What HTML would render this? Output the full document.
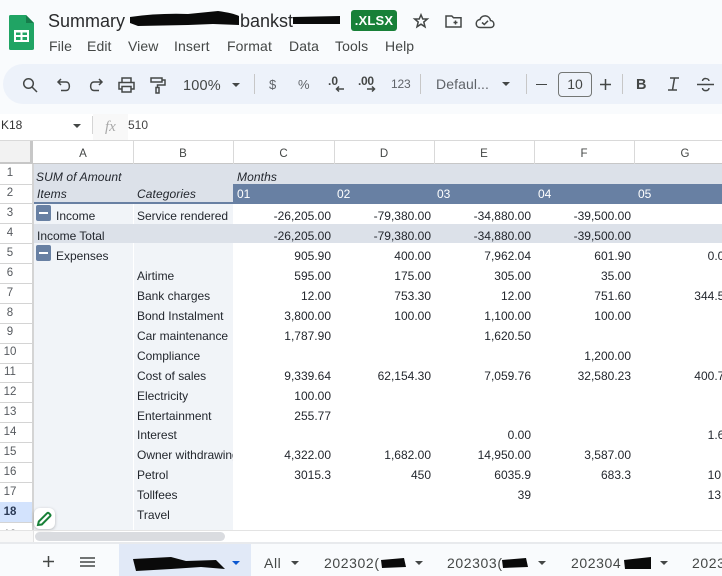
<!DOCTYPE html>
<html><head><meta charset="utf-8"><style>
html,body{margin:0;padding:0;width:722px;height:576px;overflow:hidden;background:#fff}
body{position:relative;font-family:"Liberation Sans",sans-serif;color:#333}
div,span{position:absolute;white-space:nowrap}
svg{position:absolute;overflow:visible}
.b{line-height:16px;height:16px;font-size:12px;color:#23272e}
.t{letter-spacing:-.02px}
.n{text-align:right;width:80px}
.c{left:251px}.d{left:351px}.e{left:451px}.f{left:551px}.g{left:651px}
.i{font-style:italic;letter-spacing:.1px}
.rh{left:0;width:33px;text-align:center;font-size:11.5px;line-height:18px;color:#55595e;padding-right:13px;box-sizing:border-box}
.rl{left:0;width:33px;height:1px;background:#d4d4d4}
.ch{top:144px;text-align:center;font-size:11.5px;line-height:20px;color:#444746}
.m{top:37px;font-size:14px;line-height:18px;color:#444746;letter-spacing:.1px}
.tt{top:554px;font-size:14px;line-height:18px;color:#444746;letter-spacing:.6px}
.ar{width:0;height:0;border-left:4px solid transparent;border-right:4px solid transparent;border-top:4px solid #444746}
.ic{fill:none;stroke:#444746;stroke-width:1.5}
.sep{width:1px;height:20px;top:74px;background:#c7c7c7}
</style></head><body>
<div style="left:0;top:0;width:722px;height:114px;background:#f9fbfd"></div>
<div style="left:3px;top:64px;width:760px;height:40px;border-radius:20px;background:#edf2fa"></div>

<svg style="left:8px;top:15px" width="27" height="36" viewBox="0 0 27 36"><path d="M2.500 0H18L26 8V33.500Q26 35 24 35H2.500Q1 35 1 33.500V1.500Q1 0 2.500 0Z" fill="#20a464"/><path d="M18 0L26 8H18Z" fill="#167c4b"/><path d="M6 15H21V27H6Z" fill="#fff"/><path d="M8 17.500H12.500V20H8ZM14.500 17.500H19V20H14.500ZM8 22H12.500V25H8ZM14.500 22H19V25H14.500Z" fill="#20a464"/></svg>

<div style="left:48px;top:10px;font-size:18px;line-height:22px;color:#2a2b2d">Summary</div>
<div style="left:240px;top:10px;font-size:18px;line-height:22px;color:#2a2b2d">bankst</div>
<svg style="left:128px;top:10px" width="215" height="20"><path d="M2 7Q30 3 60 4L90 1Q105 3 111 6V15L85 14L60 15L10 16L2 13Z" fill="#0a0a0a"/><path d="M165 7L212 6L212 14L165 14Z" fill="#0a0a0a"/></svg>
<div style="left:351px;top:10px;width:46px;height:21px;border-radius:3px;background:#188038;color:#fff;font-size:13px;font-weight:bold;line-height:21px;text-align:center;letter-spacing:.2px">.XLSX</div>
<svg style="left:413px;top:13px" width="16" height="16" viewBox="0 0 16 16"><path class="ic" d="M8 1.800L9.800 6H14.300L10.800 9L12 13.800L8 11.200L4 13.800L5.200 9L1.700 6H6.200Z"/></svg>
<svg style="left:445px;top:14px" width="18" height="15" viewBox="0 0 18 15"><path class="ic" d="M1 2V13H16V3.800H8.500L6.800 2ZM8.500 8.500H12.500M10.500 6.500V10.500"/></svg>
<svg style="left:475px;top:14px" width="20" height="15" viewBox="0 0 20 15"><path class="ic" d="M5 13.500H15.500C20 13.500 20 7 15.500 6.500C14.500 1 7 0 5 5.500C0 6 0 13.500 5 13.500ZM7 8.500L9.300 10.500L13 6.800"/></svg>

<div class="m" style="left:49px">File</div><div class="m" style="left:87px">Edit</div><div class="m" style="left:128px">View</div><div class="m" style="left:174px">Insert</div><div class="m" style="left:227px">Format</div><div class="m" style="left:289px">Data</div><div class="m" style="left:335px">Tools</div><div class="m" style="left:385px">Help</div>

<svg style="left:22px;top:77px" width="16" height="16" viewBox="0 0 16 16"><circle class="ic" cx="6.500" cy="6.500" r="4.800" stroke-width="1.700"/><path class="ic" stroke-width="1.800" d="M10 10L15 15"/></svg>
<svg style="left:57px;top:78px" width="15" height="14" viewBox="0 0 15 14"><path class="ic" d="M4 1L1 4L4 7M1.500 4H9C13.500 4 13.500 12.500 9 12.500H4"/></svg>
<svg style="left:88px;top:78px" width="15" height="14" viewBox="0 0 15 14"><path class="ic" d="M11 1L14 4L11 7M13.500 4H6C1.500 4 1.500 12.500 6 12.500H11"/></svg>
<svg style="left:118px;top:77px" width="17" height="16" viewBox="0 0 17 16"><path class="ic" d="M4 5V1H13V5M4 12H1V5.500H16V12H13M4 9.500H13V15H4Z"/></svg>
<svg style="left:150px;top:77px" width="16" height="17" viewBox="0 0 16 17"><path class="ic" d="M1 1H12V5H1ZM12 3H15V8H7.500V10.500M6 10.500H9V16H6Z"/></svg>
<div style="left:183px;top:77px;font-size:14.500px;line-height:18px;color:#444746;letter-spacing:.2px">100%</div>
<div class="ar" style="left:232px;top:83px"></div>
<div class="sep" style="left:254px"></div>
<div style="left:269px;top:76px;font-size:13px;line-height:17px;color:#5f6368">$</div>
<div style="left:298px;top:76px;font-size:13px;line-height:17px;color:#5f6368">%</div>
<div style="left:328px;top:73px;font-size:12px;font-weight:bold;line-height:16px;color:#444746">.0</div>
<svg style="left:335px;top:85px" width="10" height="8"><path class="ic" d="M9 4H1.500M4 1.500L1.500 4L4 6.500"/></svg>
<div style="left:358px;top:73px;font-size:12px;font-weight:bold;line-height:16px;color:#444746;letter-spacing:-.3px">.00</div>
<svg style="left:366px;top:85px" width="10" height="8"><path class="ic" d="M1 4H8.500M6 1.500L8.500 4L6 6.500"/></svg>
<div style="left:391px;top:76px;font-size:12px;line-height:16px;color:#5f6368;letter-spacing:-.2px">123</div>
<div class="sep" style="left:420px"></div>
<div style="left:436px;top:75px;font-size:14px;line-height:18px;color:#5f6368;letter-spacing:.1px">Defaul...</div>
<div class="ar" style="left:502px;top:82px"></div>
<div class="sep" style="left:526px"></div>
<div style="left:536px;top:84px;width:11px;height:1px;background:#444746"></div>
<div style="left:558px;top:72px;width:32px;height:23px;border:1px solid #747775;border-radius:4px;text-align:center;font-size:14px;line-height:23px;color:#444746">10</div>
<svg style="left:600px;top:79px" width="11" height="11"><path class="ic" d="M0 5.500H11M5.500 0V11"/></svg>
<div class="sep" style="left:622px"></div>
<div style="left:636px;top:76px;font-size:14.500px;font-weight:bold;line-height:18px;color:#444746">B</div>
<svg style="left:667px;top:77px" width="13" height="14"><path class="ic" stroke-width="1.800" d="M3 1H12M1 13H10M7.500 1L5.500 13"/></svg>
<svg style="left:697px;top:77px" width="18" height="15"><path class="ic" d="M0 7.500H17M12 4C12 1 5.500 0.500 5.500 4M5.500 11C5.500 14.500 12 14.500 12 11"/></svg>

<div style="left:1px;top:117px;font-size:12px;line-height:16px;color:#333">K18</div>
<div class="ar" style="left:73px;top:124px"></div>
<div style="left:92px;top:116px;width:1px;height:18px;background:#d5d5d5"></div>
<div style="left:93px;top:114px;width:35px;height:26px;background:#f8f8f8"></div>
<div style="left:105px;top:118px;font-family:'Liberation Serif',serif;font-style:italic;font-size:15px;line-height:18px;color:#a8a8a8">fx</div>
<div style="left:128px;top:117px;font-size:12px;line-height:16px;color:#444">510</div>

<div style="left:0;top:140px;width:722px;height:1px;background:#d9d9d9"></div>
<div style="left:0;top:141px;width:30px;height:21px;background:#f2f2f2"></div>
<div style="left:30px;top:141px;width:3px;height:23px;background:#c7c7c7"></div>
<div style="left:0;top:162px;width:33px;height:2px;background:#c7c7c7"></div>
<div style="left:33px;top:163px;width:689px;height:1px;background:#c7c7c7"></div>
<div style="left:133px;top:141px;width:1px;height:23px;background:#d9d9d9"></div>
<div style="left:233px;top:141px;width:1px;height:23px;background:#d9d9d9"></div>
<div style="left:334px;top:141px;width:1px;height:23px;background:#d9d9d9"></div>
<div style="left:434px;top:141px;width:1px;height:23px;background:#d9d9d9"></div>
<div style="left:534px;top:141px;width:1px;height:23px;background:#d9d9d9"></div>
<div style="left:634px;top:141px;width:1px;height:23px;background:#d9d9d9"></div>
<div class="ch" style="left:33px;width:100px">A</div><div class="ch" style="left:133px;width:100px">B</div><div class="ch" style="left:233px;width:101px">C</div><div class="ch" style="left:334px;width:100px">D</div><div class="ch" style="left:434px;width:100px">E</div><div class="ch" style="left:534px;width:100px">F</div><div class="ch" style="left:635px;width:100px">G</div>

<div style="left:33px;top:164px;width:689px;height:20px;background:#dce1e9"></div>
<div style="left:33px;top:184px;width:200px;height:18px;background:#dce1e9"></div>
<div style="left:33px;top:202px;width:200px;height:2px;background:#6880a3"></div>
<div style="left:233px;top:184px;width:489px;height:20px;background:#6880a3"></div>
<div style="left:33px;top:204px;width:200px;height:20px;background:#f1f4f8"></div>
<div style="left:33px;top:224px;width:689px;height:19px;background:#dce1e9"></div>
<div style="left:33px;top:243px;width:200px;height:287px;background:#f1f4f8"></div>
<div style="left:133px;top:204px;width:1px;height:20px;background:#fff"></div>
<div style="left:133px;top:243px;width:1px;height:287px;background:#fff"></div>

<div class="rh" style="top:164px">1</div><div class="rl" style="top:184px"></div>
<div class="rh" style="top:184px">2</div><div class="rl" style="top:203px"></div>
<div class="rh" style="top:204px">3</div><div class="rl" style="top:223px"></div>
<div class="rh" style="top:224px">4</div><div class="rl" style="top:243px"></div>
<div class="rh" style="top:244px">5</div><div class="rl" style="top:263px"></div>
<div class="rh" style="top:264px">6</div><div class="rl" style="top:283px"></div>
<div class="rh" style="top:284px">7</div><div class="rl" style="top:303px"></div>
<div class="rh" style="top:304px">8</div><div class="rl" style="top:323px"></div>
<div class="rh" style="top:323px">9</div><div class="rl" style="top:343px"></div>
<div class="rh" style="top:343px">10</div><div class="rl" style="top:363px"></div>
<div class="rh" style="top:363px">11</div><div class="rl" style="top:382px"></div>
<div class="rh" style="top:383px">12</div><div class="rl" style="top:402px"></div>
<div class="rh" style="top:403px">13</div><div class="rl" style="top:422px"></div>
<div class="rh" style="top:423px">14</div><div class="rl" style="top:442px"></div>
<div class="rh" style="top:443px">15</div><div class="rl" style="top:462px"></div>
<div class="rh" style="top:463px">16</div><div class="rl" style="top:482px"></div>
<div class="rh" style="top:483px">17</div><div class="rl" style="top:502px"></div>
<div style="left:0;top:502px;width:33px;height:20px;background:#d3e3fd"></div>
<div class="rh" style="top:503px;font-weight:bold;color:#2b3a55">18</div>
<div class="rl" style="top:522px"></div>
<div style="left:32px;top:164px;width:2px;height:366px;background:#d4d4d4"></div>
<div class="rh" style="top:526px;height:4px;overflow:hidden">19</div>

<div class="b t i" style="left:36px;top:169px">SUM of Amount</div>
<div class="b t i" style="left:237px;top:169px">Months</div>
<div class="b t i" style="left:37px;top:186px">Items</div>
<div class="b t i" style="left:137px;top:186px">Categories</div>
<div class="b" style="left:237px;top:186px;color:#fff">01</div>
<div class="b" style="left:337px;top:186px;color:#fff">02</div>
<div class="b" style="left:437px;top:186px;color:#fff">03</div>
<div class="b" style="left:538px;top:186px;color:#fff">04</div>
<div class="b" style="left:638px;top:186px;color:#fff">05</div>

<div style="left:36px;top:205px;width:15px;height:16px;border-radius:2px;background:#6880a3"></div>
<div style="left:39px;top:212px;width:9px;height:2px;background:#fff"></div>
<div style="left:36px;top:245px;width:15px;height:16px;border-radius:2px;background:#6880a3"></div>
<div style="left:39px;top:252px;width:9px;height:2px;background:#fff"></div>

<div class="b t" style="left:56px;top:208px">Income</div>
<div class="b t" style="left:137px;top:208px">Service rendered</div>
<div class="b n c" style="top:208px">-26,205.00</div><div class="b n d" style="top:208px">-79,380.00</div><div class="b n e" style="top:208px">-34,880.00</div><div class="b n f" style="top:208px">-39,500.00</div>
<div class="b t" style="left:37px;top:228px">Income Total</div>
<div class="b n c" style="top:228px">-26,205.00</div><div class="b n d" style="top:228px">-79,380.00</div><div class="b n e" style="top:228px">-34,880.00</div><div class="b n f" style="top:228px">-39,500.00</div>
<div class="b t" style="left:56px;top:248px">Expenses</div>
<div class="b n c" style="top:248px">905.90</div><div class="b n d" style="top:248px">400.00</div><div class="b n e" style="top:248px">7,962.04</div><div class="b n f" style="top:248px">601.90</div><div class="b n g" style="top:248px">0.00</div>
<div class="b t" style="left:137px;top:268px">Airtime</div>
<div class="b n c" style="top:268px">595.00</div><div class="b n d" style="top:268px">175.00</div><div class="b n e" style="top:268px">305.00</div><div class="b n f" style="top:268px">35.00</div>
<div class="b t" style="left:137px;top:288px">Bank charges</div>
<div class="b n c" style="top:288px">12.00</div><div class="b n d" style="top:288px">753.30</div><div class="b n e" style="top:288px">12.00</div><div class="b n f" style="top:288px">751.60</div><div class="b n g" style="top:288px">344.50</div>
<div class="b t" style="left:137px;top:308px">Bond Instalment</div>
<div class="b n c" style="top:308px">3,800.00</div><div class="b n d" style="top:308px">100.00</div><div class="b n e" style="top:308px">1,100.00</div><div class="b n f" style="top:308px">100.00</div>
<div class="b t" style="left:137px;top:328px">Car maintenance</div>
<div class="b n c" style="top:328px">1,787.90</div><div class="b n e" style="top:328px">1,620.50</div>
<div class="b t" style="left:137px;top:348px">Compliance</div>
<div class="b n f" style="top:348px">1,200.00</div>
<div class="b t" style="left:137px;top:368px">Cost of sales</div>
<div class="b n c" style="top:368px">9,339.64</div><div class="b n d" style="top:368px">62,154.30</div><div class="b n e" style="top:368px">7,059.76</div><div class="b n f" style="top:368px">32,580.23</div><div class="b n g" style="top:368px">400.70</div>
<div class="b t" style="left:137px;top:388px">Electricity</div>
<div class="b n c" style="top:388px">100.00</div>
<div class="b t" style="left:137px;top:408px">Entertainment</div>
<div class="b n c" style="top:408px">255.77</div>
<div class="b t" style="left:137px;top:427px">Interest</div>
<div class="b n e" style="top:427px">0.00</div><div class="b n g" style="top:427px">1.60</div>
<div class="b t" style="left:137px;top:447px;width:96px;overflow:hidden">Owner withdrawing</div>
<div class="b n c" style="top:447px">4,322.00</div><div class="b n d" style="top:447px">1,682.00</div><div class="b n e" style="top:447px">14,950.00</div><div class="b n f" style="top:447px">3,587.00</div>
<div class="b t" style="left:137px;top:467px">Petrol</div>
<div class="b n c" style="top:467px">3015.3</div><div class="b n d" style="top:467px">450</div><div class="b n e" style="top:467px">6035.9</div><div class="b n f" style="top:467px">683.3</div><div class="b n g" style="top:467px">10.5</div>
<div class="b t" style="left:137px;top:487px">Tollfees</div>
<div class="b n e" style="top:487px">39</div><div class="b n g" style="top:487px">13.5</div>
<div class="b t" style="left:137px;top:507px">Travel</div>

<div style="left:34px;top:508px;width:21px;height:21px;border-radius:6px;background:#fff;box-shadow:0 1px 3px rgba(0,0,0,.25)"></div>
<svg style="left:37px;top:511px" width="15" height="15" viewBox="0 0 15 15"><path d="M1 14L1.800 10.500L10 2.300Q11 1.300 12 2.300L13 3.300Q14 4.300 13 5.300L4.800 13.500Z" fill="none" stroke="#188038" stroke-width="2"/></svg>

<div style="left:0;top:530px;width:722px;height:1px;background:#e3e3e3"></div>
<div style="left:0;top:531px;width:33px;height:11px;background:#f8f8f8"></div>
<div style="left:33px;top:530px;width:1px;height:12px;background:#e3e3e3"></div>
<div style="left:35px;top:532px;width:190px;height:9px;border-radius:5px;background:#dadce0"></div>
<div style="left:0;top:542px;width:722px;height:2px;background:#e8eaed"></div>
<div style="left:0;top:544px;width:722px;height:32px;background:#f9fbfd"></div>
<div style="left:119px;top:544px;width:132px;height:32px;background:#e1e9f7"></div>

<svg style="left:43px;top:556px" width="11" height="11"><path d="M0 5.500H11M5.500 0V11" fill="none" stroke="#444746" stroke-width="1.500"/></svg>
<svg style="left:80px;top:557px" width="15" height="10"><path d="M0 1H15M0 5H15M0 9H15" fill="none" stroke="#444746" stroke-width="1.500"/></svg>
<svg style="left:131px;top:555px" width="96" height="19"><path d="M2 4L40 2L55 6L85 5L94 14L70 12L40 14L5 16Z" fill="#0a0a0a"/></svg>
<div class="ar" style="left:232px;top:561px;border-top-color:#0b57d0"></div>
<div class="tt" style="left:264px">All</div><div class="ar" style="left:291px;top:561px"></div>
<div class="tt" style="left:324px">202302(</div>
<svg style="left:380px;top:557px" width="26" height="13"><path d="M1 3L24 1L26 10L2 11Z" fill="#0a0a0a"/></svg>
<div class="ar" style="left:415px;top:561px"></div>
<div class="tt" style="left:447px">202303(</div>
<svg style="left:501px;top:557px" width="27" height="13"><path d="M1 3L25 1L27 10L2 11Z" fill="#0a0a0a"/></svg>
<div class="ar" style="left:538px;top:561px"></div>
<div class="tt" style="left:571px">202304</div>
<svg style="left:623px;top:557px" width="28" height="13"><path d="M1 3L28 0V12L2 12Z" fill="#0a0a0a"/></svg>
<div class="ar" style="left:660px;top:561px"></div>
<div class="tt" style="left:692px">2023</div>
</body></html>
